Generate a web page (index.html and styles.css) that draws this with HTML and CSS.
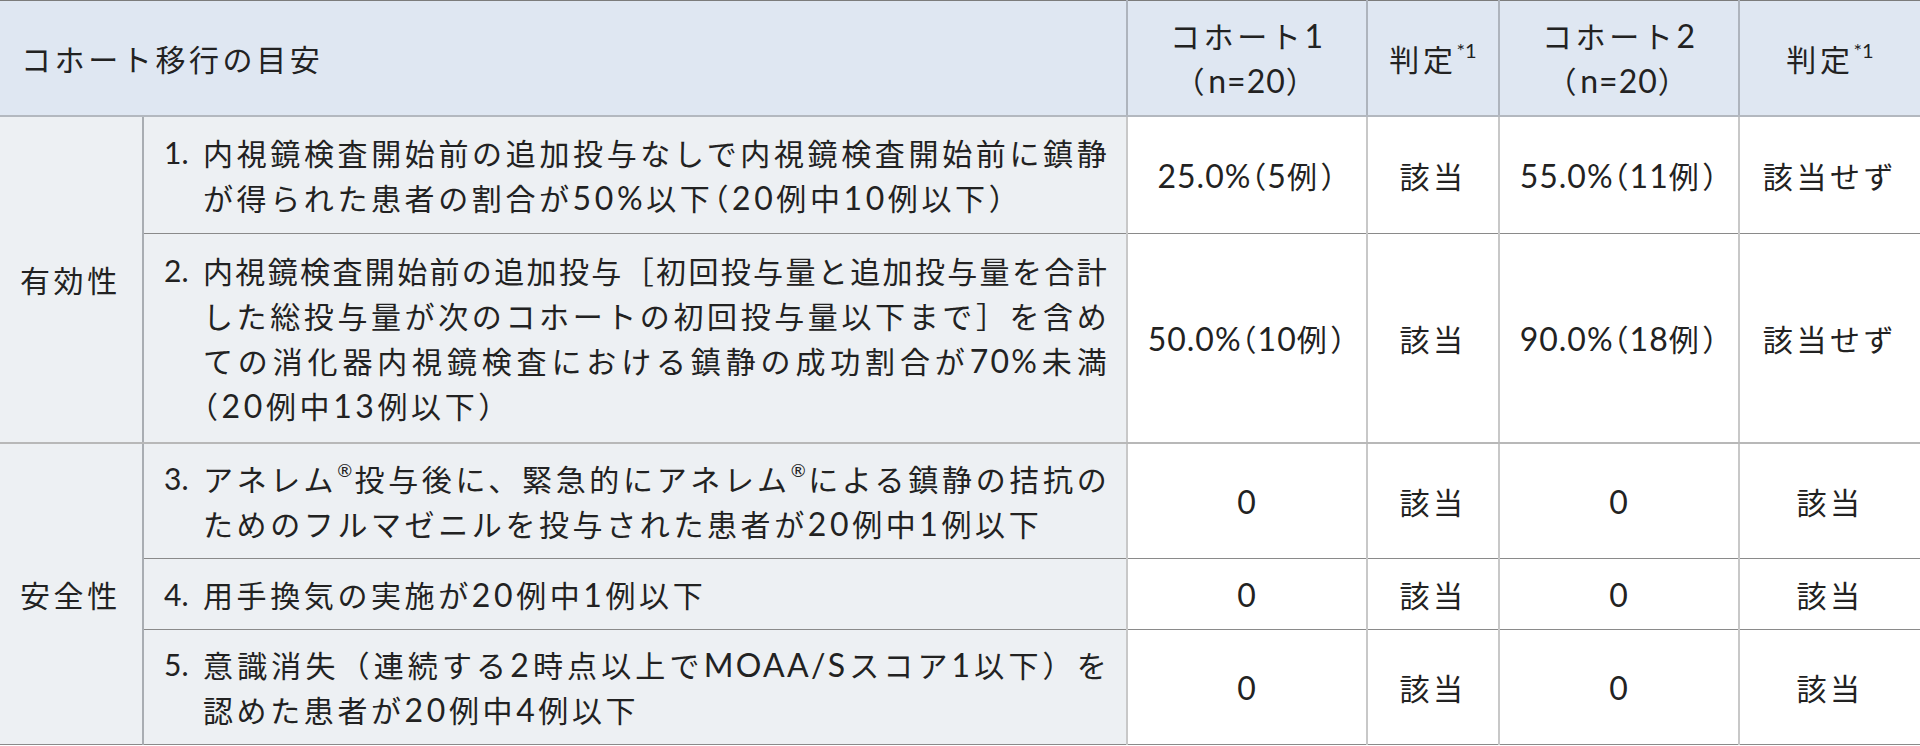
FILE: index.html
```html
<!DOCTYPE html>
<html lang="ja">
<head>
<meta charset="utf-8">
<title>コホート移行の目安</title>
<link rel="stylesheet" href="styles.css">
</head>
<body>
<table class="criteria">
  <colgroup>
    <col class="c-cat">
    <col class="c-item">
    <col class="c-val">
    <col class="c-judge">
    <col class="c-val">
    <col class="c-judge2">
  </colgroup>
  <thead>
    <tr class="r-head">
      <th colspan="2" class="h-title">コホート移行の目安</th>
      <th class="h-col">コホート<span class="en">1</span><br>（<span class="en">n=20</span>）</th>
      <th class="h-col">判定<sup>*1</sup></th>
      <th class="h-col">コホート<span class="en">2</span><br>（<span class="en">n=20</span>）</th>
      <th class="h-col">判定<sup>*1</sup></th>
    </tr>
  </thead>
  <tbody class="g-first">
    <tr class="row-a">
      <th rowspan="2" class="cat">有効性</th>
      <td class="item"><div class="num-row"><span class="num">1.</span><span class="txt"><span class="line just">内視鏡検査開始前の追加投与なしで内視鏡検査開始前に鎮静</span><span class="line">が得られた患者の割合が<span class="en">50%</span>以下<span class="pp">（</span><span class="en">20</span>例中<span class="en">10</span>例以下<span class="pp">）</span></span></span></div></td>
      <td class="val"><span class="en">25.0%</span><span class="pp">（</span><span class="en">5</span>例<span class="pp">）</span></td>
      <td class="val">該当</td>
      <td class="val"><span class="en">55.0%</span><span class="pp">（</span><span class="en">11</span>例<span class="pp">）</span></td>
      <td class="val">該当せず</td>
    </tr>
    <tr class="row-b">
      <td class="item"><div class="num-row"><span class="num">2.</span><span class="txt"><span class="line just">内視鏡検査開始前の追加投与［初回投与量と追加投与量を合計</span><span class="line just">した総投与量が次のコホートの初回投与量以下まで］を含め</span><span class="line just">ての消化器内視鏡検査における鎮静の成功割合が<span class="en">70%</span>未満</span><span class="line"><span class="pp">（</span><span class="en">20</span>例中<span class="en">13</span>例以下<span class="pp">）</span></span></span></div></td>
      <td class="val"><span class="en">50.0%</span><span class="pp">（</span><span class="en">10</span>例<span class="pp">）</span></td>
      <td class="val">該当</td>
      <td class="val"><span class="en">90.0%</span><span class="pp">（</span><span class="en">18</span>例<span class="pp">）</span></td>
      <td class="val">該当せず</td>
    </tr>
  </tbody>
  <tbody class="g-second">
    <tr class="row-c">
      <th rowspan="3" class="cat">安全性</th>
      <td class="item"><div class="num-row"><span class="num">3.</span><span class="txt"><span class="line just">アネレム<sup class="reg">®</sup>投与後に、緊急的にアネレム<sup class="reg">®</sup>による鎮静の拮抗の</span><span class="line">ためのフルマゼニルを投与された患者が<span class="en">20</span>例中<span class="en">1</span>例以下</span></span></div></td>
      <td class="val"><span class="en">0</span></td>
      <td class="val">該当</td>
      <td class="val"><span class="en">0</span></td>
      <td class="val">該当</td>
    </tr>
    <tr class="row-d">
      <td class="item"><div class="num-row"><span class="num">4.</span><span class="txt"><span class="line">用手換気の実施が<span class="en">20</span>例中<span class="en">1</span>例以下</span></span></div></td>
      <td class="val"><span class="en">0</span></td>
      <td class="val">該当</td>
      <td class="val"><span class="en">0</span></td>
      <td class="val">該当</td>
    </tr>
    <tr class="row-e">
      <td class="item"><div class="num-row"><span class="num">5.</span><span class="txt"><span class="line just">意識消失（連続する<span class="en">2</span>時点以上で<span class="en">MOAA/S</span>スコア<span class="en">1</span>以下）を</span><span class="line">認めた患者が<span class="en">20</span>例中<span class="en">4</span>例以下</span></span></div></td>
      <td class="val"><span class="en">0</span></td>
      <td class="val">該当</td>
      <td class="val"><span class="en">0</span></td>
      <td class="val">該当</td>
    </tr>
  </tbody>
</table>
</body>
</html>
```
FILE: styles.css
```css
html, body {
  margin: 0;
  padding: 0;
  background: #ffffff;
}
body {
  font-family: "Noto Sans CJK JP", "Noto Sans", sans-serif;
  color: #222222;
}
.criteria {
  width: 1920px;
  table-layout: fixed;
  border-collapse: collapse;
  border-top: 1px solid #7c7c7c;
  border-bottom: 1px solid #8a8a8a;
  font-size: 30px;
  line-height: 45px;
  letter-spacing: 3.6px;
}
.c-cat { width: 143px; }
.c-item { width: 984px; }
.c-val { width: 240px; }
.c-judge { width: 132px; }
.c-judge2 { width: 181px; }

.criteria th, .criteria td {
  padding: 0;
  font-weight: 400;
  vertical-align: middle;
  border-left: 2px solid #c8c8c8;
  border-right: 2px solid #c8c8c8;
}
.criteria tr > :first-child { border-left: none; }
.criteria tr > :last-child { border-right: none; }

.en {
  font-family: "Lato", "Noto Sans", sans-serif;
  font-size: 32px;
}
.pp {
  font-feature-settings: "halt";
}

.r-head th {
  background: #dfe7f2;
  height: 114px;
  border-bottom: 2px solid #b3b8bf;
  border-left-color: #aeb4bd;
  border-right-color: #aeb4bd;
}
.h-title {
  text-align: left;
  padding-left: 21px !important;
}
.h-col {
  text-align: center;
}
.h-col .en {
  letter-spacing: 1px;
}
sup {
  font-family: "Lato", sans-serif;
  font-size: 20px;
  line-height: 0;
  letter-spacing: 0;
  vertical-align: 13px;
  margin-left: 0;
}
sup.reg {
  font-size: 18px;
  vertical-align: 14px;
  margin-right: 1px;
}

.cat {
  background: #edf0f3;
  text-align: left;
  padding-left: 20px !important;
  border-right: 2px solid #a9adb2 !important;
}
.item {
  background: #edf0f3;
  text-align: left;
  padding: 0 17px 0 20px !important;
}
.val {
  background: #ffffff;
  text-align: center;
}
.val .en, .val .pp {
  letter-spacing: 1px;
}
.num-row {
  display: flex;
}
.num {
  flex: 0 0 39px;
  font-family: "Lato", sans-serif;
  letter-spacing: 0;
}
.txt {
  flex: 1 1 auto;
  min-width: 0;
}
.line {
  display: block;
  white-space: nowrap;
}
.line.just {
  letter-spacing: 2.3px;
  text-align: justify;
  text-align-last: justify;
}

.row-a > td { height: 116px; }
.row-b > td { height: 208px; }
.row-c > td { height: 114px; }
.row-d > td { height: 70px; }
.row-e > td { height: 114px; }

.g-first tr:first-child > td { border-bottom: 1px solid #8a8a8a; }
.g-first tr:last-child > td { border-bottom: 2px solid #b8b8b8; }
.g-second tr > td { border-bottom: 1px solid #8a8a8a; }
.g-first .cat { border-bottom: 2px solid #b8b8b8; }
```
